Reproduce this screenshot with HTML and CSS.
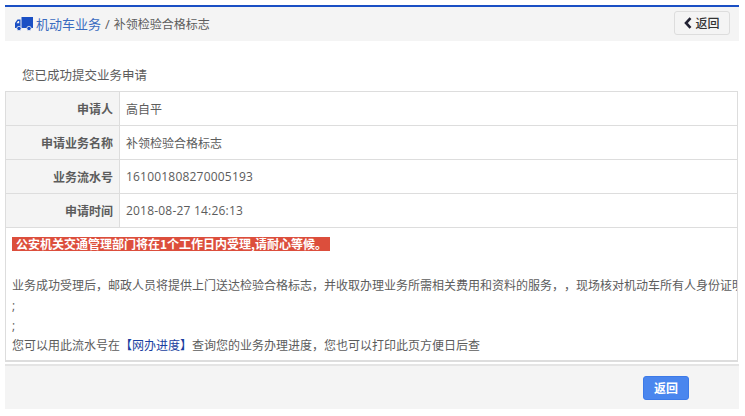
FILE: index.html
```html
<!DOCTYPE html>
<html lang="zh-CN">
<head>
<meta charset="utf-8">
<title>补领检验合格标志</title>
<link rel="stylesheet" href="styles.css">
</head>
<body>
<div class="page">
  <header class="head">
    <div class="crumbs">
      <svg class="truck" viewBox="0 0 18 14" width="18" height="14"><path fill="#1a4fc4" d="M6.500 0H18v11H6.500zM0 6l2.500-3.500H5.500V11H0z"/><circle cx="4" cy="11.500" r="2.200" fill="#1a4fc4" stroke="#f4f4f4" stroke-width=".8"/><circle cx="14" cy="11.500" r="2.200" fill="#1a4fc4" stroke="#f4f4f4" stroke-width=".8"/><path fill="#f4f4f4" d="M1.500 6.200 3 4h1.200v2.200z"/></svg>
      <a class="root">机动车业务</a>
      <span class="sep">/</span>
      <span class="cur">补领检验合格标志</span>
    </div>
    <button class="back"><svg viewBox="0 0 8 12" width="8" height="12"><path d="M6.500 1.200 2 6l4.500 4.800" fill="none" stroke="#223" stroke-width="2.600"/></svg>返回</button>
  </header>
  <h2 class="title">您已成功提交业务申请</h2>
  <div class="table">
    <div class="row"><div class="lab">申请人</div><div class="val">高自平</div></div>
    <div class="row"><div class="lab">申请业务名称</div><div class="val">补领检验合格标志</div></div>
    <div class="row"><div class="lab">业务流水号</div><div class="val num">161001808270005193</div></div>
    <div class="row"><div class="lab">申请时间</div><div class="val num">2018-08-27 14:26:13</div></div>
    <div class="notes">
      <div class="alert"><span>公安机关交通管理部门将在1个工作日内受理,请耐心等候。</span></div>
      <p class="long">业务成功受理后，邮政人员将提供上门送达检验合格标志，并收取办理业务所需相关费用和资料的服务，<span class="gap">，</span>现场核对机动车所有人身份证明</p>
      <p class="semi">;</p>
      <p class="semi">;</p>
      <p class="last">您可以用此流水号在<a class="link">【网办进度】</a>查询您的业务办理进度，您也可以打印此页方便日后查</p>
    </div>
  </div>
  <footer class="foot"><button class="primary">返回</button></footer>
</div>
</body>
</html>
```
FILE: styles.css
```css
* { box-sizing: border-box; }
html, body { margin: 0; padding: 0; background: #fff; }
body { font-family: "Open Sans", "Noto Sans CJK SC", sans-serif; font-size: 12px; color: #5c5c5c; height: 416px; overflow: hidden; }
.page { width: 734px; margin: 5px 0 0 5px; }
.head { height: 36px; border-top: 2px solid #1a4fc4; background: #f4f4f4; display: flex; align-items: center; justify-content: space-between; padding: 0 9px 0 10px; }
.crumbs { display: flex; align-items: center; }
.truck { margin-right: 3px; }
.root { font-size: 13px; color: #3a6bc0; margin-top: -1px; }
.sep { margin: 0 4px; font-size: 13px; color: #5c5c5c; }
.cur { font-size: 12px; color: #5c5c5c; }
.back { width: 56px; height: 24px; padding: 0; border: 1px solid #ddd; border-radius: 3px; background: #f4f4f4; font: inherit; font-weight: 500; color: #333; display: flex; align-items: center; justify-content: center; gap: 3px; margin-top: -3px; }
.title { margin: 0; height: 50px; padding: 26px 0 0 17px; font-size: 12.500px; line-height: 18px; font-weight: 400; color: #5c5c5c; }
.table { width: 733px; border: 1px solid #ddd; border-bottom-width: 2px; }
.row { display: flex; height: 34px; border-bottom: 1px solid #ddd; }
.lab { width: 114px; flex: none; padding-right: 6px; display: flex; align-items: center; justify-content: flex-end; background: #f4f4f4; border-right: 1px solid #ddd; font-weight: 700; color: #5c5c5c; }
.val { padding-left: 6px; display: flex; align-items: center; color: #5c5c5c; }
.num { letter-spacing: .2px; }
.notes { height: 132px; padding: 9px 0 0 6px; overflow: hidden; }
.alert { height: 14px; line-height: 14px; }
.alert span { display: inline-block; height: 14px; padding: 0 3px 0 4px; background: #dc4e3c; color: #fff; font-size: 12px; font-weight: 700; line-height: 14px; font-family: "Noto Sans CJK SC", sans-serif; }
.notes p { margin: 0; white-space: nowrap; line-height: 20px; height: 20px; color: #5c5c5c; }
.notes .long { margin-top: 25px; }
.gap { margin-left: 6px; }
.link { color: #1a3fa0; }
.foot { height: 45px; margin-top: 2px; border-top: 2px solid #e4e4e4; background: #f4f4f4; display: flex; align-items: center; justify-content: flex-end; padding: 0 50px 0 0; }
.primary { width: 46px; height: 24px; padding: 0; border: 1px solid #3d7ae8; border-radius: 3px; background: #4a86ee; color: #fff; font: inherit; font-weight: 700; margin-top: 1px; }
```
